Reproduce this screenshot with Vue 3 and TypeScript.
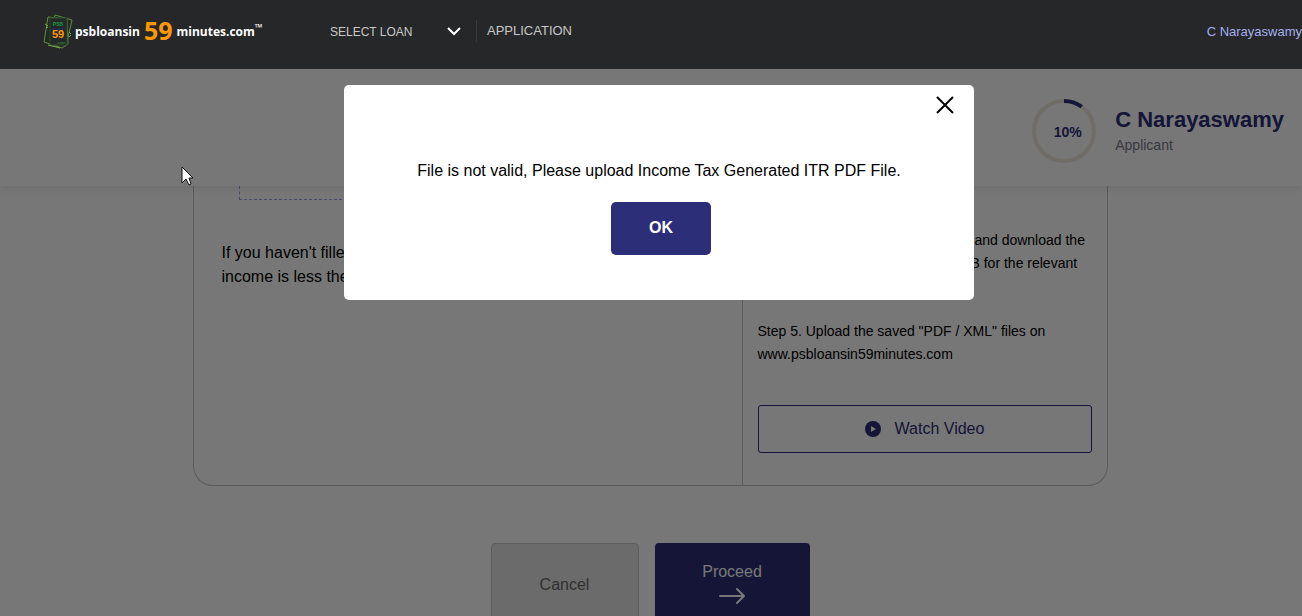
<script setup lang="ts">
import { ref } from 'vue'

const applicant = 'C Narayaswamy'
const progress = ref(10)
const circumference = 2 * Math.PI * 30
const dialogOpen = ref(true)

function closeDialog(): void {
  dialogOpen.value = false
}
</script>

<template>
  <div class="page">
    <header class="topbar">
      <a class="logo" href="#" aria-label="psbloansin59minutes.com">
        <svg class="notes" width="30" height="36" viewBox="0 0 30 36" aria-hidden="true">
          <g fill="#242826" stroke="#5f8f3c" stroke-width="1">
            <path d="M12 1 L29 6 L23 32 L6 27 Z" />
            <path d="M5 3 L24 5 L25 30 L19 34 L1 28 Z" />
            <path d="M7 4 H24 V31 H7 Z" stroke="#2c4a2a" />
          </g>
          <path d="M2 10 l3 2 M3 14 l2 -1 M26 18 l2 2 M26 23 l2 -2 M5 31 l12 3" stroke="#79a94b" fill="none" />
          <path d="M9 15 H22" stroke="#242a5c" stroke-width="2" stroke-dasharray="2 1" />
          <text x="15" y="12" class="note-psb">PSB</text>
          <text x="15" y="24" class="note-num">59</text>
          <text x="18" y="30" class="note-com">.com</text>
        </svg>
        <span class="word">psbloansin</span>
        <span class="big">59</span>
        <span class="word">minutes.com<sup>™</sup></span>
      </a>
      <nav class="nav">
        <button class="navbtn" type="button">
          SELECT LOAN
          <svg width="14" height="9" viewBox="0 0 14 9" aria-hidden="true">
            <path d="M1 1 L7 7 L13 1" fill="none" stroke="#fff" stroke-width="2" />
          </svg>
        </button>
        <a class="navlink" href="#">APPLICATION</a>
      </nav>
      <a class="user" href="#">{{ applicant }}</a>
    </header>

    <section class="profile">
      <div class="ring">
        <svg width="64" height="64" viewBox="0 0 64 64" aria-hidden="true">
          <circle cx="32" cy="32" r="30" fill="none" stroke="#f0e8dc" stroke-width="4" />
          <circle
            cx="32" cy="32" r="30" fill="none" stroke="#2d2e78" stroke-width="4"
            :stroke-dasharray="`${(circumference * progress) / 100} ${circumference}`"
            transform="rotate(-90 32 32)"
          />
        </svg>
        <span class="percent">{{ progress }}%</span>
      </div>
      <div>
        <h1>{{ applicant }}</h1>
        <p class="role">Applicant</p>
      </div>
    </section>

    <main class="content">
      <div class="card">
        <div class="left">
          <div class="dropzone"></div>
          <p>If you haven't filled<br />income is less then</p>
        </div>
        <div class="right">
          <p class="step download">&nbsp;and download the<br />B for the relevant</p>
          <p class="step">Step 5. Upload the saved "PDF / XML" files on www.psbloansin59minutes.com</p>
          <button class="watch" type="button">
            <svg width="16" height="16" viewBox="0 0 16 16" aria-hidden="true">
              <circle cx="8" cy="8" r="8" fill="#2d2e78" />
              <path d="M6 5 L11 8 L6 11 Z" fill="#fff" />
            </svg>
            Watch Video
          </button>
        </div>
      </div>
      <div class="actions">
        <button class="cancel" type="button">Cancel</button>
        <button class="proceed" type="button">
          Proceed
          <svg width="26" height="16" viewBox="0 0 26 16" aria-hidden="true">
            <path d="M1 8 H25 M18 1 L25 8 L18 15" fill="none" stroke="#fff" stroke-width="2" stroke-linecap="round" />
          </svg>
        </button>
      </div>
    </main>

    <div v-if="dialogOpen" class="overlay">
      <div class="dialog" role="dialog" aria-modal="true" aria-labelledby="dialog-message">
        <button class="close" type="button" aria-label="Close" @click="closeDialog">
          <svg width="18" height="18" viewBox="0 0 18 18" aria-hidden="true">
            <path d="M1 1 L17 17 M17 1 L1 17" stroke="#000" stroke-width="2" />
          </svg>
        </button>
        <p id="dialog-message">File is not valid, Please upload Income Tax Generated ITR PDF File.</p>
        <button class="ok" type="button" @click="closeDialog">OK</button>
      </div>
    </div>

    <svg class="cursor" width="13" height="20" viewBox="0 0 13 20" aria-hidden="true">
      <path d="M1 1 V17 L5 13 L8 19 L10 18 L8 12 H12 Z" fill="#fff" stroke="#111" stroke-width="1" />
    </svg>
  </div>
</template>

<style>
body {
  margin: 0;
}
</style>

<style scoped>
.page {
  position: relative;
  display: flex;
  flex-direction: column;
  height: 100vh;
  overflow: hidden;
  background: #fff;
  color: #000;
  font-family: "Liberation Sans", Arial, sans-serif;
  font-size: 16px;
}
.page * {
  box-sizing: border-box;
}
p,
h1 {
  margin: 0;
}
button {
  font: inherit;
  cursor: pointer;
}
a {
  text-decoration: none;
}
.topbar {
  position: relative;
  z-index: 3;
  display: flex;
  flex: none;
  align-items: flex-start;
  height: 69px;
  padding: 0 0 0 43px;
  background: #262729;
}
.logo {
  display: flex;
  align-items: flex-start;
  width: 287px;
  height: 64px;
  color: #fff;
  font-family: "Open Sans", "Noto Sans", sans-serif;
  font-weight: 700;
  line-height: 64px;
}
.notes {
  margin: 14px 2px 0 0;
}
.note-psb,
.note-num,
.note-com {
  font-family: "Liberation Sans", sans-serif;
  font-weight: 700;
  text-anchor: middle;
}
.note-psb {
  fill: #12a048;
  font-size: 5px;
}
.note-num {
  fill: #ff9800;
  font-size: 11px;
}
.note-com {
  fill: #23763a;
  font-size: 4px;
}
.word {
  font-size: 12px;
}
.big {
  margin: 0 4px;
  color: #ff9800;
  font-family: "Noto Sans", sans-serif;
  font-size: 25px;
  font-weight: 700;
  line-height: 60px;
}
.word sup {
  font-size: 10px;
  line-height: 0;
}
.nav {
  display: flex;
  align-items: flex-start;
  padding-top: 20px;
}
.navbtn {
  display: flex;
  align-items: center;
  justify-content: space-between;
  width: 147px;
  height: 22px;
  padding: 1px 15px 0 0;
  border: 0;
  border-right: 1px solid #38393b;
  background: none;
  color: #c8c8c8;
  font-size: 12px;
}
.navlink {
  padding-left: 10px;
  color: #c8c8c8;
  font-size: 13px;
  line-height: 22px;
}
.user {
  margin-left: auto;
  padding-top: 21px;
  color: #a3b0f0;
  font-size: 13px;
  line-height: 22px;
}
.profile {
  position: relative;
  z-index: 1;
  display: flex;
  flex: none;
  justify-content: flex-end;
  gap: 19px;
  height: 117px;
  padding: 30px 18px 0 0;
  background: #fff;
  box-shadow: 0 2px 8px rgba(0, 0, 0, 0.1);
}
.ring {
  display: grid;
  width: 64px;
  height: 64px;
}
.ring > * {
  grid-area: 1 / 1;
}
.percent {
  place-self: center;
  padding: 2px 0 0 7px;
  color: #2d2e78;
  font-size: 14px;
  font-weight: 700;
}
h1 {
  padding-top: 7px;
  color: #2d2e78;
  font-size: 22px;
  line-height: 28px;
}
.role {
  color: #777a88;
  font-size: 14px;
  line-height: 22px;
}
.content {
  display: flex;
  flex: none;
  flex-direction: column;
  align-items: center;
  padding-right: 2px;
}
.card {
  display: flex;
  width: 915px;
  max-width: 100%;
  height: 300px;
  border: 1px solid #c4c4c4;
  border-top: 0;
  border-radius: 0 0 20px 20px;
}
.left {
  flex: 1;
  padding: 0 45px;
}
.left p {
  margin: 41px 0 0 -17px;
  line-height: 24px;
}
.dropzone {
  height: 14px;
  border: 1px dashed #9aa0d8;
  border-top: 0;
}
.right {
  width: 365px;
  padding: 43px 15px 0;
  border-left: 1px solid #c4c4c4;
}
.step {
  margin-bottom: 45px;
  font-size: 14px;
  line-height: 23px;
}
.download {
  padding-left: 213px;
  white-space: nowrap;
}
.watch {
  display: flex;
  align-items: center;
  justify-content: center;
  gap: 14px;
  width: 100%;
  height: 48px;
  margin-top: -6px;
  border: 1px solid #2d2e78;
  border-radius: 3px;
  background: #fff;
  color: #2d2e78;
}
.actions {
  display: flex;
  gap: 16px;
  margin-top: 57px;
}
.actions button {
  height: 84px;
  border-radius: 4px;
}
.cancel {
  width: 148px;
  border: 1px solid #c8c8c8;
  background: #e6e6e6;
  color: #666;
}
.proceed {
  display: flex;
  flex-direction: column;
  align-items: center;
  justify-content: center;
  gap: 7px;
  width: 155px;
  padding-bottom: 4px;
  border: 0;
  background: #2d2e78;
  color: #fff;
}
.overlay {
  position: absolute;
  inset: 0;
  z-index: 2;
  display: flex;
  align-items: flex-start;
  justify-content: center;
  padding: 85px 0 0 16px;
  background: rgba(0, 0, 0, 0.533);
}
.dialog {
  display: flex;
  flex-direction: column;
  align-items: center;
  width: 630px;
  height: 215px;
  border-radius: 5px;
  background: #fff;
}
.close {
  display: flex;
  align-self: flex-end;
  margin: 9px 18px 0 0;
  padding: 2px;
  border: 0;
  background: none;
}
.dialog p {
  margin-top: 43px;
  line-height: 24px;
}
.ok {
  width: 100px;
  height: 53px;
  margin: 19px 0 0 4px;
  padding: 0 0 2px;
  border: 0;
  border-radius: 5px;
  background: #2d2e78;
  color: #fff;
  font-weight: 700;
}
.cursor {
  position: absolute;
  top: 166px;
  left: 181px;
  z-index: 4;
}
</style>
